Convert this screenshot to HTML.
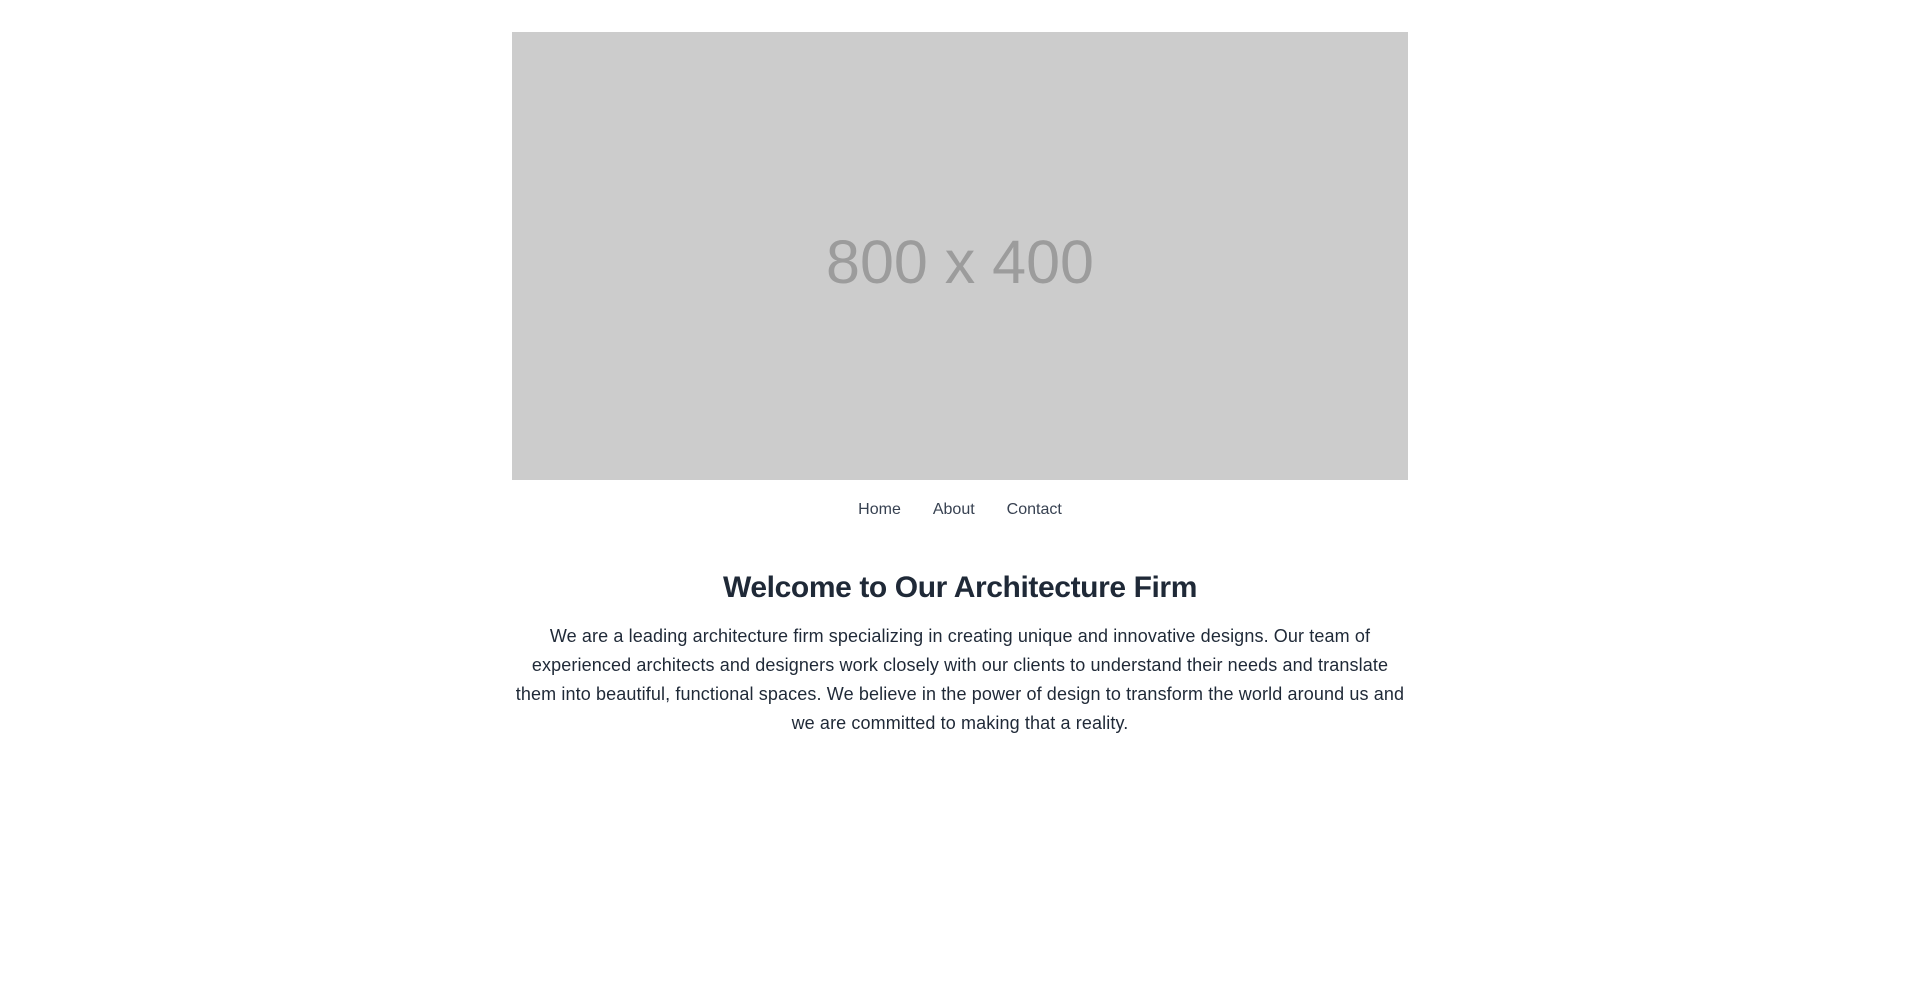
<!DOCTYPE html>
<html><head><meta charset="utf-8"><style>
html,body{margin:0;padding:0;background:#fff;width:1920px;height:995px;overflow:hidden;font-family:"Liberation Sans",Arial,sans-serif}
.img{position:absolute;left:512px;top:32px;width:896px;height:448px;background:#cccccc;color:#9c9c9c;font-size:61px}
.img div{position:absolute;left:0;right:0;top:195px;text-align:center;line-height:70px}
.nav{position:absolute;left:0;width:1920px;top:500px;text-align:center;font-size:16px;color:#374151;line-height:20px}
.nav span{margin:0 16px}
h1{position:absolute;left:0;width:1920px;top:568px;margin:0;text-align:center;font-size:30px;line-height:40px;font-weight:bold;color:#1f2937;letter-spacing:-0.4px}
p{position:absolute;left:490px;width:940px;top:622px;margin:0;text-align:center;font-size:18px;line-height:29px;color:#1f2937;white-space:nowrap;letter-spacing:0.12px}
</style></head><body>
<div class="img"><div>800 x 400</div></div>
<div class="nav"><span>Home</span><span>About</span><span>Contact</span></div>
<h1>Welcome to Our Architecture Firm</h1>
<p>We are a leading architecture firm specializing in creating unique and innovative designs. Our team of<br>experienced architects and designers work closely with our clients to understand their needs and translate<br>them into beautiful, functional spaces. We believe in the power of design to transform the world around us and<br>we are committed to making that a reality.</p>
</body></html>
